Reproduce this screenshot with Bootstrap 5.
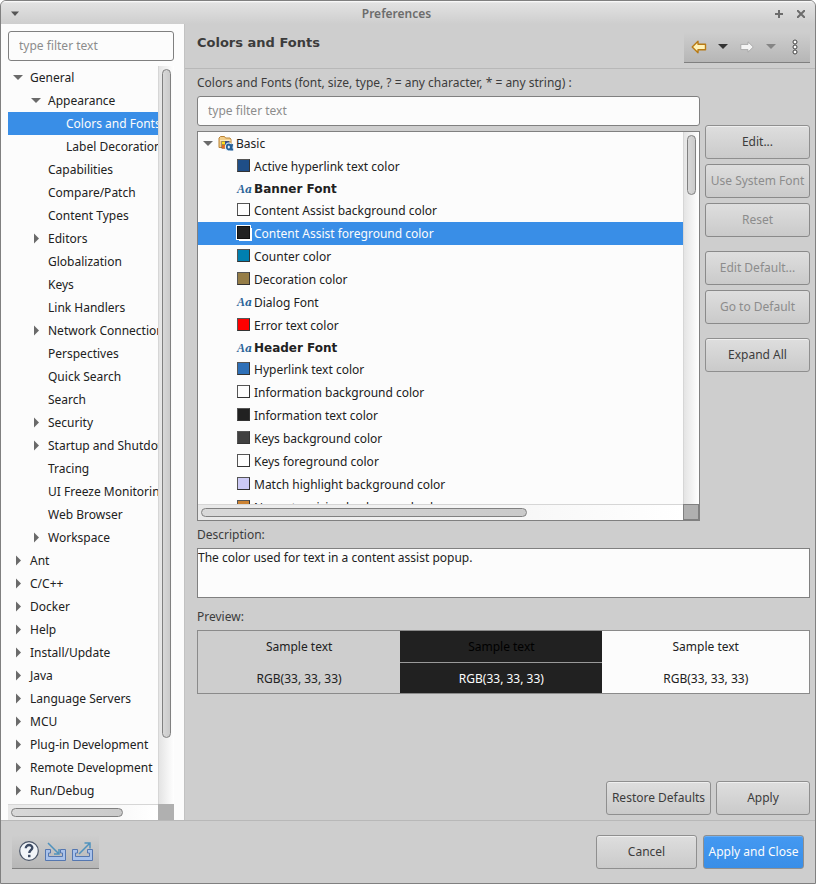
<!DOCTYPE html>
<html lang="en">
<head>
<meta charset="utf-8">
<meta name="viewport" content="width=device-width, initial-scale=1">
<title>Preferences</title>
<link rel="stylesheet" href="https://cdn.jsdelivr.net/npm/bootstrap@5.3.0/dist/css/bootstrap.min.css">
<style>
:root { --win: #cecece; --line: #808080; --soft: #b8b8b8; --sel: #398ee7; --paper: #fcfcfc; --ink: #212121; }
body { font-family: "Noto Sans", "Liberation Sans", sans-serif; font-size: 12px; line-height: 17px; color: #3c3c3c; background: #fff; }
ul { list-style: none; }
.window { background: var(--win); border: 1px solid var(--line); border-radius: 6px 6px 0 0; }
.titlebar { height: 23px; padding: 2px 10px 0 9px; background: linear-gradient(#fff 0, #e2e2e2 2px, #cecece 100%); border-radius: 5px 5px 0 0; }
.titlebar h1 { font-size: 12px; line-height: 21px; font-weight: 600; color: #6c6c6c; padding-right: 2px; }
.win-buttons { gap: 14px; }
.plain { border: 0; background: none; padding: 0; line-height: 0; }
.side { width: 184px; background: var(--paper); border-right: 1px solid #c2c2c2; padding: 7px 10px 0 7px; }
.filter { height: 30px; padding: 0 10px 1px; font-size: 12px; border: 1px solid var(--line); border-radius: 3px; background: var(--paper); color: var(--ink); }
.filter::placeholder { color: #8c8c8c; opacity: 1; }
.pages { margin-top: 5px; }
.row-item { display: flex; align-items: center; height: 23px; color: var(--ink); white-space: nowrap; gap: 6px; padding-left: 4px; }
.row-item::before { content: ""; width: 12px; flex: none; }
.row-item.open::before { height: 5px; background: #6a6a6a; clip-path: polygon(1px 0, 11px 0, 6px 5px); }
.row-item.shut::before { height: 12px; background: #6a6a6a; clip-path: polygon(4px 1px, 9px 6px, 4px 11px); }
ul ul .row-item { padding-left: 22px; }
ul ul ul .row-item { padding-left: 40px; }
.chosen, .chosen.row-item { background: var(--sel); color: #fcfcfc; }
.bar-v { width: 16px; padding: 3px 4px 0 3px; background: linear-gradient(90deg, #e4e4e4, #fff); border-left: 1px solid #d6d6d6; }
.bar-h { height: 16px; padding: 3px 2px 4px 3px; background: linear-gradient(90deg, #e8e8e8, #fff); border-top: 1px solid #d6d6d6; }
.thumb { border: 1px solid var(--line); border-radius: 5px; background: linear-gradient(90deg, #d8d8d8, #cacaca); }
.bar-v .thumb { width: 9px; }
.bar-h .thumb { height: 9px; }
.corner { width: 16px; background: #b0b0b0; }
.corner-framed { border: 1px solid var(--line); }
.thumb-side-v { height: 91%; }
.thumb-side-h { width: 77%; }
.thumb-list-v { height: 60px; }
.thumb-list-h { width: 68%; }
.head { height: 45px; padding: 0 5px 0 12px; border-bottom: 1px solid var(--soft); }
.head h2 { font-family: "DejaVu Sans", sans-serif; font-weight: bold; font-size: 13px; line-height: 17px; color: #3c3c3c; padding-top: 10px; }
.tools { background: linear-gradient(#cecece, #b6b6b6); border-bottom: 1px solid var(--line); }
.tools-top { height: 31px; width: 126px; margin-top: 8px; padding: 0 3px 1px; }
.tools-top .plain { width: 24px; }
.tools-foot { height: 34px; padding: 0 5px 2px 6px; gap: 4px; }
.content { padding: 5px 5px 5px 12px; }
.picker { gap: 5px; }
.list { height: 390px; border: 1px solid var(--line); background: var(--paper); margin-top: 5px; }
.list .row-item { gap: 2px; align-items: flex-start; line-height: 23px; }
.list .row-item.open::before { margin: 9px 2px 0 0; }
.list .leaf, .list .leaf.row-item { padding-left: 38px; }
.list .leaf::before { display: none; }
.list .fontrow { font-family: "DejaVu Sans", sans-serif; font-weight: bold; height: 21px; line-height: 22px; }
.ico { width: 16px; height: 16px; margin-top: 3px; flex: none; }
.swatch { display: block; width: 13px; height: 13px; margin: 4px 2px 0 1px; flex: none; border: 1px solid; border-color: #555 #333 #333 #555; }
.chosen .swatch { border-color: #111; outline: 1px solid #fff; box-shadow: 2px 2px 0 #fff; }
.aa { width: 16px; flex: none; font: italic bold 12px/21px "Liberation Serif", serif; color: #2a6398; padding-left: 1px; margin-top: 1px; }
.aa b { font: italic bold 11px/12px "DejaVu Serif", serif; }
.c-link { background: #1f4e87; } .c-white { background: #fdfdfd; } .c-ink { background: #212121; }
.c-teal { background: #007fb0; } .c-olive { background: #957d47; } .c-red { background: #f00; }
.c-blue { background: #2e70b8; } .c-grey { background: #404040; } .c-lilac { background: #cdcbf6; } .c-orange { background: #cc8333; }
.btn-gtk { --bs-btn-font-size: 12px; --bs-btn-line-height: 17px; --bs-btn-border-radius: 3px; --bs-btn-color: #3c3c3c; --bs-btn-border-color: #8f8f8f; --bs-btn-disabled-color: #8c8c8c; --bs-btn-disabled-border-color: #8a8a8a; --bs-btn-disabled-opacity: 1; height: 34px; padding: 0 4px 2px; white-space: nowrap; background: linear-gradient(#dedede, #cacaca); box-shadow: inset 0 1px #efefef; }
.btn-gtk:disabled { box-shadow: none; }
.btn-main { --bs-btn-color: #fcfcfc; background: linear-gradient(#4499f2, #398ee7); box-shadow: inset 0 1px #6aaef4; }
.actions { width: 105px; padding-top: 29px; gap: 5px; }
.group-gap { margin-top: 9px; }
.desc { height: 50px; border: 1px solid var(--line); border-radius: 0; background: var(--paper); color: var(--ink); font-size: 12px; line-height: 17px; padding: 0; resize: none; }
.field-label { line-height: 17px; margin-bottom: 5px; }
.label-desc { margin-top: 5px; }
.label-preview { margin-top: 10px; }
.preview { border: 1px solid #8a8a8a; border-collapse: separate; border-spacing: 0; table-layout: fixed; color: var(--ink); }
.preview td { height: 30px; padding: 0; text-align: center; vertical-align: middle; width: 33.1%; }
.preview td:last-child { width: auto; }
.preview tr:first-child td { height: 32px; border-bottom: 1px solid transparent; }
.preview .on-dark { background: var(--ink); color: #fcfcfc; }
.preview tr:first-child .on-dark { color: #000; border-bottom-color: #9a9a9a; }
.preview .on-light { background: var(--paper); }
.w-apply { width: 94px; } .w-restore { width: 105px; } .w-foot { width: 101px; }
.foot { height: 63px; border-top: 1px solid var(--soft); padding: 0 11px; }
.foot-buttons { gap: 6px; }
</style>
</head>
<body>
<div class="window d-flex flex-column min-vh-100">
  <header class="titlebar d-flex align-items-center">
    <button class="plain" aria-label="Window menu"><svg width="10" height="6"><path d="M1 .5h8l-4 4.500z" fill="#555"/></svg></button>
    <h1 class="flex-grow-1 text-center mb-0">Preferences</h1>
    <div class="d-flex win-buttons">
      <button class="plain" aria-label="Maximize"><svg width="8" height="8"><path d="M4 0v8M0 4h8" stroke="#6c6c6c" stroke-width="2"/></svg></button>
      <button class="plain" aria-label="Close"><svg width="8" height="8"><path d="M0 0l8 8M8 0L0 8" stroke="#6c6c6c" stroke-width="2"/></svg></button>
    </div>
  </header>

  <div class="d-flex flex-grow-1">
    <nav class="side d-flex flex-column flex-shrink-0" aria-label="Preference pages">
      <input class="filter w-100" type="text" placeholder="type filter text" aria-label="Filter pages">
      <div class="d-flex flex-grow-1 pages">
        <ul class="flex-grow-1 overflow-hidden p-0 m-0" role="tree">
          <li role="treeitem"><div class="row-item open">General</div>
            <ul class="p-0" role="group">
              <li role="treeitem"><div class="row-item open">Appearance</div>
                <ul class="p-0" role="group">
                  <li class="row-item chosen" role="treeitem" aria-selected="true">Colors and Fonts</li>
                  <li class="row-item" role="treeitem">Label Decorations</li>
                </ul>
              </li>
              <li class="row-item" role="treeitem">Capabilities</li>
              <li class="row-item" role="treeitem">Compare/Patch</li>
              <li class="row-item" role="treeitem">Content Types</li>
              <li class="row-item shut" role="treeitem">Editors</li>
              <li class="row-item" role="treeitem">Globalization</li>
              <li class="row-item" role="treeitem">Keys</li>
              <li class="row-item" role="treeitem">Link Handlers</li>
              <li class="row-item shut" role="treeitem">Network Connections</li>
              <li class="row-item" role="treeitem">Perspectives</li>
              <li class="row-item" role="treeitem">Quick Search</li>
              <li class="row-item" role="treeitem">Search</li>
              <li class="row-item shut" role="treeitem">Security</li>
              <li class="row-item shut" role="treeitem">Startup and Shutdown</li>
              <li class="row-item" role="treeitem">Tracing</li>
              <li class="row-item" role="treeitem">UI Freeze Monitoring</li>
              <li class="row-item" role="treeitem">Web Browser</li>
              <li class="row-item shut" role="treeitem">Workspace</li>
            </ul>
          </li>
          <li class="row-item shut" role="treeitem">Ant</li>
          <li class="row-item shut" role="treeitem">C/C++</li>
          <li class="row-item shut" role="treeitem">Docker</li>
          <li class="row-item shut" role="treeitem">Help</li>
          <li class="row-item shut" role="treeitem">Install/Update</li>
          <li class="row-item shut" role="treeitem">Java</li>
          <li class="row-item shut" role="treeitem">Language Servers</li>
          <li class="row-item shut" role="treeitem">MCU</li>
          <li class="row-item shut" role="treeitem">Plug-in Development</li>
          <li class="row-item shut" role="treeitem">Remote Development</li>
          <li class="row-item shut" role="treeitem">Run/Debug</li>
        </ul>
        <div class="bar-v flex-shrink-0"><div class="thumb thumb-side-v"></div></div>
      </div>
      <div class="d-flex"><div class="bar-h flex-grow-1"><div class="thumb thumb-side-h"></div></div><div class="corner"></div></div>
    </nav>

    <main class="d-flex flex-column flex-grow-1">
      <div class="head d-flex justify-content-between align-items-start">
        <h2 class="mb-0">Colors and Fonts</h2>
        <div class="tools tools-top d-flex align-items-center">
          <button class="plain" aria-label="Back"><svg width="16" height="14"><path d="M1.200 7L7 1.200v3h7.500v5.600H7v3z" fill="#fff2b8" stroke="#b87a14" stroke-width="1.400" stroke-linejoin="round"/></svg></button>
          <button class="plain" aria-label="Back history"><svg width="10" height="5"><path d="M0 0h10L5 5z" fill="#333"/></svg></button>
          <button class="plain" aria-label="Forward"><svg width="14" height="12"><path d="M13.300 6L8 .8v2.600H.8v5.200H8v2.600z" fill="#f4f4f4" stroke="#aaa" stroke-linejoin="round"/></svg></button>
          <button class="plain" aria-label="Forward history"><svg width="10" height="5"><path d="M0 0h10L5 5z" fill="#858585"/></svg></button>
          <button class="plain" aria-label="View menu"><svg width="6" height="16"><g fill="#fff" stroke="#444"><circle cx="3" cy="3" r="2"/><circle cx="3" cy="8" r="2"/><circle cx="3" cy="13" r="2"/></g></svg></button>
        </div>
      </div>

      <div class="content d-flex flex-column flex-grow-1">
        <label class="field-label" for="colorFilter">Colors and Fonts (font, size, type, ? = any character, * = any string) :</label>
        <div class="d-flex picker">
          <div class="flex-grow-1">
            <input class="filter w-100 d-block" id="colorFilter" type="text" placeholder="type filter text">
            <div class="list d-flex flex-column">
              <div class="d-flex flex-grow-1 overflow-hidden">
                <ul class="flex-grow-1 overflow-hidden p-0 m-0" role="tree" aria-label="Colors and fonts">
                  <li class="row-item open" role="treeitem"><svg class="ico" viewBox="0 0 16 16"><path d="M1 12.500v-9.500l1.500-1.500h4l1 1.500h4.500l1 1.500v8z" fill="#f3cf8b" stroke="#b98235"/><path d="M2 5.500h10.500" stroke="#fbe9bf"/><path d="M3.500 6h8v7.500h-8z" fill="#555"/><path d="M7 6.500h4v3H7z" fill="#304d9b"/><path d="M4 6.500h3v3H4z" fill="#ffdd1e"/><path d="M4 10h4v3.500H4z" fill="#e06b21"/><g fill="none" stroke="#e5eff8" stroke-width="4"><ellipse cx="10.800" cy="12" rx="2" ry="2.500"/><path d="M14.200 9l-1 5h2"/></g><g fill="none" stroke="#245f98" stroke-width="1.800"><ellipse cx="10.800" cy="12" rx="2" ry="2.500"/><path d="M14.200 9l-1 5.500h2"/></g></svg>Basic</li>
                  <li class="row-item leaf" role="treeitem"><span class="swatch c-link"></span>Active hyperlink text color</li>
                  <li class="row-item leaf fontrow" role="treeitem"><span class="aa" aria-hidden="true">A<b>a</b></span>Banner Font</li>
                  <li class="row-item leaf" role="treeitem"><span class="swatch c-white"></span>Content Assist background color</li>
                  <li class="row-item leaf chosen" role="treeitem" aria-selected="true"><span class="swatch c-ink"></span>Content Assist foreground color</li>
                  <li class="row-item leaf" role="treeitem"><span class="swatch c-teal"></span>Counter color</li>
                  <li class="row-item leaf" role="treeitem"><span class="swatch c-olive"></span>Decoration color</li>
                  <li class="row-item leaf" role="treeitem"><span class="aa" aria-hidden="true">A<b>a</b></span>Dialog Font</li>
                  <li class="row-item leaf" role="treeitem"><span class="swatch c-red"></span>Error text color</li>
                  <li class="row-item leaf fontrow" role="treeitem"><span class="aa" aria-hidden="true">A<b>a</b></span>Header Font</li>
                  <li class="row-item leaf" role="treeitem"><span class="swatch c-blue"></span>Hyperlink text color</li>
                  <li class="row-item leaf" role="treeitem"><span class="swatch c-white"></span>Information background color</li>
                  <li class="row-item leaf" role="treeitem"><span class="swatch c-ink"></span>Information text color</li>
                  <li class="row-item leaf" role="treeitem"><span class="swatch c-grey"></span>Keys background color</li>
                  <li class="row-item leaf" role="treeitem"><span class="swatch c-white"></span>Keys foreground color</li>
                  <li class="row-item leaf" role="treeitem"><span class="swatch c-lilac"></span>Match highlight background color</li>
                  <li class="row-item leaf" role="treeitem"><span class="swatch c-orange"></span>Newest revision background color</li>
                </ul>
                <div class="bar-v flex-shrink-0"><div class="thumb thumb-list-v"></div></div>
              </div>
              <div class="d-flex"><div class="bar-h flex-grow-1"><div class="thumb thumb-list-h"></div></div><div class="corner corner-framed"></div></div>
            </div>
          </div>
          <div class="actions d-flex flex-column flex-shrink-0">
            <button class="btn btn-gtk">Edit...</button>
            <button class="btn btn-gtk" disabled>Use System Font</button>
            <button class="btn btn-gtk" disabled>Reset</button>
            <button class="btn btn-gtk group-gap" disabled>Edit Default...</button>
            <button class="btn btn-gtk" disabled>Go to Default</button>
            <button class="btn btn-gtk group-gap">Expand All</button>
          </div>
        </div>

        <label class="field-label label-desc" for="description">Description:</label>
        <textarea class="desc w-100" id="description" readonly>The color used for text in a content assist popup.</textarea>

        <div class="field-label label-preview" id="previewLabel">Preview:</div>
        <table class="preview w-100" aria-labelledby="previewLabel">
          <tbody>
            <tr><td>Sample text</td><td class="on-dark">Sample text</td><td class="on-light">Sample text</td></tr>
            <tr><td>RGB(33, 33, 33)</td><td class="on-dark">RGB(33, 33, 33)</td><td class="on-light">RGB(33, 33, 33)</td></tr>
          </tbody>
        </table>

        <div class="d-flex justify-content-end picker mt-auto">
          <button class="btn btn-gtk w-restore">Restore Defaults</button>
          <button class="btn btn-gtk w-apply">Apply</button>
        </div>
      </div>
    </main>
  </div>

  <footer class="foot d-flex align-items-center justify-content-between">
    <div class="tools tools-foot d-flex align-items-center">
      <button class="plain" aria-label="Help"><svg width="22" height="22"><circle cx="11" cy="11" r="9.300" fill="#f1f4f8" stroke="#4a5568" stroke-width="1.200"/><path d="M7.800 8.200c0-4.300 6.800-4 6.500-.2-.2 2.200-3 2.300-3 5" fill="none" stroke="#3c4a63" stroke-width="2.400"/><path d="M10 14.800h2.500v2.400H10z" fill="#3c4a63"/></svg></button>
      <button class="plain" aria-label="Import"><svg width="23" height="22"><path d="M6.500 9.500h-5v11h20v-11h-5V13h2v3.500h-14V13h2z" fill="#a9c2ea" stroke="#5577b0"/><path d="M4 3l10.500 10.500M15 9v5h-5" fill="none" stroke="#4f92bd" stroke-width="1.500"/></svg></button>
      <button class="plain" aria-label="Export"><svg width="23" height="22"><path d="M6.500 9.500h-5v11h20v-11h-5V13h2v3.500h-14V13h2z" fill="#a9c2ea" stroke="#5577b0"/><path d="M8 14L18.500 3.500M13.500 3H19v5.500" fill="none" stroke="#4f92bd" stroke-width="1.500"/></svg></button>
    </div>
    <div class="d-flex foot-buttons">
      <button class="btn btn-gtk w-foot">Cancel</button>
      <button class="btn btn-gtk btn-main w-foot">Apply and Close</button>
    </div>
  </footer>
</div>
<script src="https://cdn.jsdelivr.net/npm/bootstrap@5.3.0/dist/js/bootstrap.bundle.min.js"></script>
</body>
</html>
